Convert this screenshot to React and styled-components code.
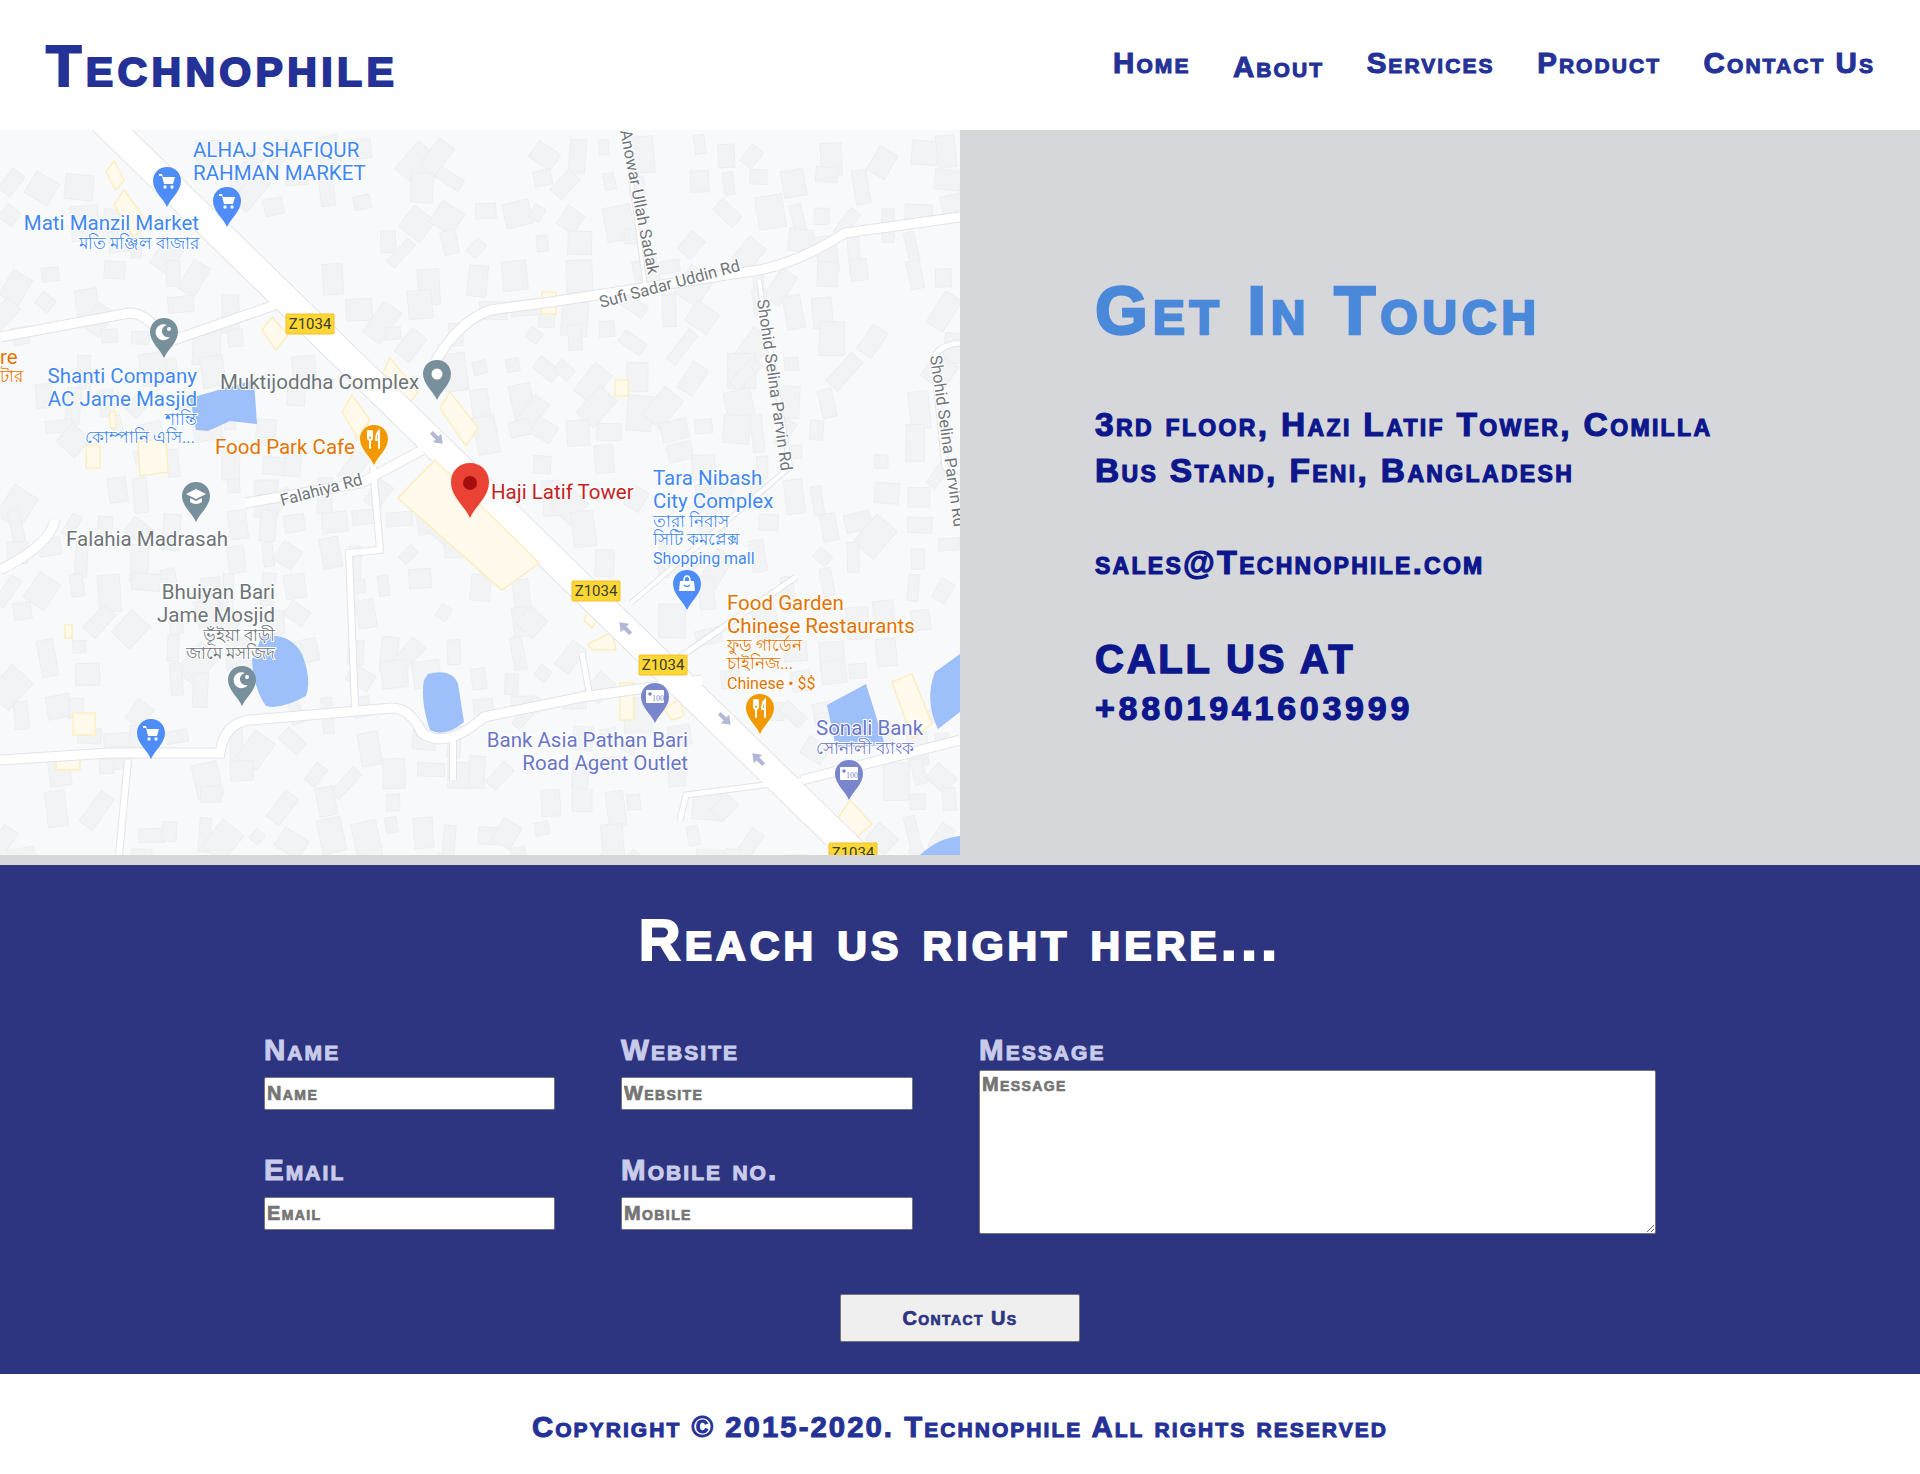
import React from 'react';
import styled, {createGlobalStyle, css} from 'styled-components';

const GlobalStyle = createGlobalStyle`
    html, body {
        margin: 0;
        padding: 0;
        background: #fff;
    }
    * {
        box-sizing: border-box;
    }
`

// arial black is not around, so bold + stroke + some tracking gets near it
const blackCaps = css`
    font-family: "Liberation Sans", Arial, sans-serif;
    font-weight: 700;
    font-variant: small-caps;
    letter-spacing: 0.07em;
    -webkit-text-stroke: 0.035em currentColor;
`

const navLinks = [
    {label: 'Home'},
    {label: 'About', lowered: true},
    {label: 'Services'},
    {label: 'Product'},
    {label: 'Contact Us'},
]

const ROADS = [
    {d: 'M435 362 Q458 322 490 310 L551 302 L759 270 Q800 262 845 233 L960 217', w: 9},
    {d: 'M0 337 L129 313 Q150 313 165 343 L275 305', w: 9},
    {d: 'M625 130 L646 293', w: 3},
    {d: 'M759 280 L762 300 L790 467 L631 603', w: 4},
    {d: 'M960 343 Q934 346 934 362 L945 467 L960 480', w: 5},
    {d: 'M245 503 L361 483 L422 450', w: 9},
    {d: 'M373 467 L380 550 L349 553 L355 707', w: 6},
    {d: 'M0 760 L110 753 L220 753 Q224 723 250 720 L392 708 Q410 708 422 733 Q447 750 484 717 L582 697 L702 680', w: 9},
    {d: 'M55 520 Q50 545 0 570', w: 9},
    {d: 'M128 760 L119 855', w: 6},
    {d: 'M453 740 L453 780', w: 6},
    {d: 'M802 780 L960 740', w: 9},
    {d: 'M680 820 L686 795 L802 780', w: 5},
    {d: 'M680 657 L796 577', w: 5},
    {d: 'M582 653 L590 697', w: 5},
    {d: 'M100 118 L875 873', w: 27},
]

const WATER = [
    'M190 398 L254 380 L257 424 L230 421 L208 431 L196 430 Z',
    'M262 636 Q290 632 302 654 Q312 680 306 696 Q280 710 266 706 Q254 690 252 660 Z',
    'M428 674 Q452 668 458 684 L464 722 Q445 738 430 730 Q420 700 424 680 Z',
    'M827 705 L866 684 L885 745 L836 748 Z',
    'M960 654 L935 672 Q924 700 938 729 L960 712 Z',
    'M920 855 Q938 838 960 836 L960 855 Z',
]

const PARCELS = [
    '435,460 539,563 502,590 398,498',
    '114,161 124,180 116,190 106,172',
    '124,190 146,220 134,238 114,205',
    '272,317 288,335 276,350 262,330',
    '390,358 418,392 408,405 383,373',
    '352,395 370,420 358,438 342,412',
    '450,392 478,428 466,446 440,408',
    '542,292 556,292 556,314 542,314',
    '615,380 628,380 628,396 615,396',
    '110,412 116,412 116,428 110,428',
    '86,445 100,445 100,468 86,468',
    '138,442 166,438 168,472 140,476',
    '65,625 72,625 72,638 65,638',
    '73,713 95,713 95,735 73,735',
    '56,758 80,758 80,770 56,770',
    '620,683 634,683 634,720 620,720',
    '590,605 602,614 592,628 584,620',
    '588,644 612,632 616,650 592,650',
    '664,709 680,699 684,716 672,720',
    '892,682 912,674 932,724 912,738',
    '850,800 872,824 856,838 838,818',
]

const buildings = () => {
    let seed = 91
    const next = () => {
        seed = (seed * 16807) % 2147483647
        return seed / 2147483647
    }
    const list = []
    for (let y = 135; y < 850; y += 31) {
        for (let x = 4; x < 955; x += 31) {
            const w = 10 + next() * 18
            const h = 12 + next() * 26
            const rot = next() > 0.7 ? 30 + next() * 14 : -14 + next() * 20
            const px = x + next() * 12
            const py = y + next() * 12
            const keep = next() > 0.38
            const gap = Math.abs((px - 100) * 0.974 - (py - 118)) / 1.4
            if (keep && gap > 34) {
                list.push({x: px, y: py, w, h, rot})
            }
        }
    }
    return list
}

const LABELS = [
    {c: 'blue', a: 'start', x: 193, y: 157, t: 'ALHAJ SHAFIQUR'},
    {c: 'blue', a: 'start', x: 193, y: 180, t: 'RAHMAN MARKET'},
    {c: 'blue', a: 'end', x: 199, y: 230, t: 'Mati Manzil Market'},
    {c: 'blue', a: 'end', x: 199, y: 249, s: 16.5, t: 'মতি মঞ্জিল বাজার'},
    {c: 'orange', a: 'start', x: 0, y: 364, t: 're'},
    {c: 'orange', a: 'start', x: 0, y: 382, s: 16.5, t: 'টার'},
    {c: 'blue', a: 'end', x: 197, y: 383, t: 'Shanti Company'},
    {c: 'blue', a: 'end', x: 197, y: 406, t: 'AC Jame Masjid'},
    {c: 'blue', a: 'end', x: 197, y: 425, s: 16.5, t: 'শান্তি'},
    {c: 'blue', a: 'end', x: 195, y: 443, s: 16.5, t: 'কোম্পানি এসি...'},
    {c: 'grey', a: 'start', x: 220, y: 389, t: 'Muktijoddha Complex'},
    {c: 'orange', a: 'start', x: 215, y: 454, t: 'Food Park Cafe'},
    {c: 'red', a: 'start', x: 491, y: 499, t: 'Haji Latif Tower'},
    {c: 'grey', a: 'start', x: 66, y: 546, t: 'Falahia Madrasah'},
    {c: 'blue', a: 'start', x: 653, y: 485, t: 'Tara Nibash'},
    {c: 'blue', a: 'start', x: 653, y: 508, t: 'City Complex'},
    {c: 'blue', a: 'start', x: 653, y: 527, s: 16.5, t: 'তারা নিবাস'},
    {c: 'blue', a: 'start', x: 653, y: 545, s: 16.5, t: 'সিটি কমপ্লেক্স'},
    {c: 'blue', a: 'start', x: 653, y: 564, s: 16, t: 'Shopping mall'},
    {c: 'grey', a: 'end', x: 275, y: 599, t: 'Bhuiyan Bari'},
    {c: 'grey', a: 'end', x: 275, y: 622, t: 'Jame Mosjid'},
    {c: 'grey', a: 'end', x: 275, y: 641, s: 16.5, t: 'ভূঁইয়া বাড়ী'},
    {c: 'grey', a: 'end', x: 275, y: 659, s: 16.5, t: 'জামে মসজিদ'},
    {c: 'orange', a: 'start', x: 727, y: 610, t: 'Food Garden'},
    {c: 'orange', a: 'start', x: 727, y: 633, t: 'Chinese Restaurants'},
    {c: 'orange', a: 'start', x: 727, y: 651, s: 16.5, t: 'ফুড গার্ডেন'},
    {c: 'orange', a: 'start', x: 727, y: 669, s: 16.5, t: 'চাইনিজ...'},
    {c: 'orange', a: 'start', x: 727, y: 689, s: 16, t: 'Chinese • $$'},
    {c: 'purple', a: 'end', x: 688, y: 747, t: 'Bank Asia Pathan Bari'},
    {c: 'purple', a: 'end', x: 688, y: 770, t: 'Road Agent Outlet'},
    {c: 'purple', a: 'start', x: 816, y: 735, t: 'Sonali Bank'},
    {c: 'purple', a: 'start', x: 816, y: 754, s: 16.5, t: 'সোনালী ব্যাংক'},
]

const ROAD_NAMES = [
    {x: 620, y: 131, r: 79, t: 'Anowar Ullah Sadak'},
    {x: 601, y: 308, r: -15, t: 'Sufi Sadar Uddin Rd'},
    {x: 757, y: 300, r: 82, t: 'Shohid Selina Parvin Rd'},
    {x: 930, y: 356, r: 82, t: 'Shohid Selina Parvin Rd'},
    {x: 282, y: 506, r: -15, t: 'Falahiya Rd'},
]

const SHIELDS = [
    {x: 310, y: 324},
    {x: 596, y: 591},
    {x: 663, y: 665},
    {x: 853, y: 853},
]

const ARROWS = [
    {x: 437, y: 438, r: 135},
    {x: 625, y: 628, r: -45},
    {x: 725, y: 719, r: 135},
    {x: 758, y: 759, r: -45},
]

const PINS = [
    {x: 167, y: 207, c: '#4e8cf7', i: 'cart'},
    {x: 227, y: 227, c: '#4e8cf7', i: 'cart'},
    {x: 151, y: 759, c: '#4e8cf7', i: 'cart'},
    {x: 164, y: 358, c: '#78909c', i: 'moon'},
    {x: 242, y: 706, c: '#78909c', i: 'moon'},
    {x: 437, y: 400, c: '#78909c', i: 'dot'},
    {x: 196, y: 522, c: '#78909c', i: 'school'},
    {x: 374, y: 465, c: '#f29900', i: 'fork'},
    {x: 760, y: 734, c: '#f29900', i: 'fork'},
    {x: 687, y: 610, c: '#4e8cf7', i: 'bag'},
    {x: 655, y: 723, c: '#7986cb', i: 'bank'},
    {x: 849, y: 800, c: '#7986cb', i: 'bank'},
]

// drawn around 0,0 = the round head of the pin
const PinGlyph = ({kind}) => {
    switch (kind) {
        case 'cart':
            return (
                <g fill="#fff">
                    <path d="M-8 -7 H-5 L-4 -4 H8 L6 3 H-3 L-5 -5 H-8 Z"/>
                    <circle cx="-2" cy="6" r="1.7"/>
                    <circle cx="5" cy="6" r="1.7"/>
                </g>
            )
        case 'moon':
            return (
                <g fill="#fff">
                    <path d="M3 -7 A8 8 0 1 0 6 5 A6.2 6.2 0 1 1 3 -7 Z"/>
                    <circle cx="5" cy="-3" r="2"/>
                </g>
            )
        case 'dot':
            return <circle r="5.5" fill="#fff"/>
        case 'school':
            return (
                <g fill="#fff">
                    <path d="M0 -7 L10 -2 L0 3 L-10 -2 Z"/>
                    <path d="M-6 2 L0 5 L6 2 V6 Q0 10 -6 6 Z"/>
                </g>
            )
        case 'fork':
            return (
                <g fill="none" stroke="#fff" strokeWidth="2" strokeLinecap="round">
                    <path d="M-6 -8 V-2 Q-6 1 -4 1 V9 M-2 -8 V-2 Q-2 1 -4 1 M-4 -8 V-3"/>
                    <path d="M5 9 V-8 Q2 -5 2 1 H5"/>
                </g>
            )
        case 'bag':
            return (
                <g>
                    <path d="M-7 -3 H7 L8 7 H-8 Z" fill="#fff"/>
                    <path d="M-3 -3 Q-3 -8 0 -8 Q3 -8 3 -3" fill="none" stroke="#fff" strokeWidth="1.6"/>
                    <path d="M-3 1 Q0 4 3 1" fill="none" stroke="#4e8cf7" strokeWidth="1.4"/>
                </g>
            )
        case 'bank':
            return (
                <g>
                    <rect x="-9" y="-7" width="18" height="13" fill="#fff" rx="1"/>
                    <circle cx="-5" cy="-3" r="1.8" fill="#7986cb"/>
                    <BankNumber x="-3" y="4">100</BankNumber>
                </g>
            )
        default:
            return null
    }
}

const MapPin = ({x, y, c, i}) => (
    <g transform={`translate(${x} ${y - 26})`}>
        <path d="M0 -14 C8 -14 14 -8 14 0 C14 10 4 17 0 26 C-4 17 -14 10 -14 0 C-14 -8 -8 -14 0 -14 Z" fill={c}/>
        <PinGlyph kind={i}/>
    </g>
)

const MapPicture = () => (
    <MapSvg viewBox="0 130 960 725" role="img" aria-label="Map around Haji Latif Tower">
        <rect x="0" y="130" width="960" height="725" fill="#f8f9fb"/>
        {buildings().map((b, idx) => (
            <Building key={idx} x={b.x} y={b.y} width={b.w} height={b.h}
                      transform={`rotate(${b.rot} ${b.x} ${b.y})`}/>
        ))}
        {PARCELS.map(p => <Parcel key={p} points={p}/>)}
        {ROADS.map(r => <RoadEdge key={r.d} d={r.d} strokeWidth={r.w + 2}/>)}
        {ROADS.map(r => <RoadFill key={r.d} d={r.d} strokeWidth={r.w}/>)}
        <Parcel points="435,460 539,563 502,590 398,498"/>
        {WATER.map(d => <path key={d} d={d} fill="#9dc0fa"/>)}
        {ARROWS.map(a => (
            <path key={a.x} transform={`translate(${a.x} ${a.y}) rotate(${a.r})`}
                  d="M0 -8 L6 0 L2 0 L2 8 L-2 8 L-2 0 L-6 0 Z" fill="#b1b7d6"/>
        ))}
        {ROAD_NAMES.map(n => (
            <RoadName key={n.x} transform={`translate(${n.x} ${n.y}) rotate(${n.r})`}>{n.t}</RoadName>
        ))}
        {SHIELDS.map(s => (
            <g key={s.x}>
                <ShieldBox x={s.x - 24} y={s.y - 10} width="48" height="20" rx="1"/>
                <ShieldText x={s.x} y={s.y + 5}>Z1034</ShieldText>
            </g>
        ))}
        {PINS.map(p => <MapPin key={`${p.x}-${p.y}`} {...p}/>)}
        <g transform="translate(470 483)">
            <path d="M0 -20 C11 -20 19 -12 19 -1 C19 14 6 22 0 35 C-6 22 -19 14 -19 -1 C-19 -12 -11 -20 0 -20 Z" fill="#ea4335"/>
            <circle r="7" fill="#a50e0e"/>
        </g>
        {LABELS.map(l => (
            <MapLabel key={`${l.x}-${l.y}`} x={l.x} y={l.y} textAnchor={l.a} $tone={l.c} $size={l.s}>{l.t}</MapLabel>
        ))}
    </MapSvg>
)

const App = () => {
    return (
        <Page>
            <GlobalStyle/>
            <Header>
                <Logo>Technophile</Logo>
                <Nav>
                    {navLinks.map(link => (
                        <NavLink key={link.label} href="#" $lowered={link.lowered}>{link.label}</NavLink>
                    ))}
                </Nav>
            </Header>

            <Hero>
                <MapPicture/>
                <TouchPanel>
                    <TouchTitle>Get In Touch</TouchTitle>
                    <Address>3rd floor, Hazi Latif Tower, Comilla<br/>Bus Stand, Feni, Bangladesh</Address>
                    <Mail>sales@Technophile.com</Mail>
                    <CallTitle>CALL US AT</CallTitle>
                    <Phone>+8801941603999</Phone>
                </TouchPanel>
            </Hero>

            <ReachSection>
                <ReachTitle>Reach us right here...</ReachTitle>
                <FormGrid>
                    <Field>
                        <FieldLabel>Name</FieldLabel>
                        <TextInput placeholder="Name"/>
                    </Field>
                    <Field>
                        <FieldLabel>Website</FieldLabel>
                        <TextInput placeholder="Website"/>
                    </Field>
                    <MessageField>
                        <MessageLabel>Message</MessageLabel>
                        <MessageBox placeholder="Message"/>
                    </MessageField>
                    <Field>
                        <FieldLabel>Email</FieldLabel>
                        <TextInput placeholder="Email"/>
                    </Field>
                    <Field>
                        <FieldLabel>Mobile no.</FieldLabel>
                        <TextInput placeholder="Mobile"/>
                    </Field>
                </FormGrid>
                <SubmitButton type="button">Contact Us</SubmitButton>
            </ReachSection>

            <Footer>Copyright © 2015-2020. Technophile All rights reserved</Footer>
        </Page>
    );
};

export default App;

const Page = styled.div`
    width: 1920px;
`

const Header = styled.header`
    height: 130px;
    display: flex;
    align-items: center;
    justify-content: space-between;
    padding: 0 45px 0 46px;
    background: #fff;
`

const Logo = styled.div`
    ${blackCaps};
    font-size: 58px;
    line-height: 1;
    letter-spacing: 0.075em;
    color: #243196;
    padding-top: 1px;
`

const Nav = styled.nav`
    display: flex;
    gap: 42.5px;
`

const NavLink = styled.a`
    ${blackCaps};
    font-size: 29.5px;
    line-height: 1;
    color: #243196;
    text-decoration: none;
    margin-top: ${props => props.$lowered ? '4px' : '0'};
`

const Hero = styled.section`
    height: 735px;
    display: grid;
    grid-template-columns: 960px 960px;
    background: #d6d7db;
`

const MapSvg = styled.svg`
    display: block;
    width: 960px;
    height: 725px;
`

const Building = styled.rect`
    fill: #f2f3f5;
    stroke: #eceef1;
    stroke-width: 1;
`

const Parcel = styled.polygon`
    fill: #fffaeb;
    stroke: #fdeec2;
    stroke-width: 1.5;
`

const RoadEdge = styled.path`
    fill: none;
    stroke: #e2e4e9;
`

const RoadFill = styled.path`
    fill: none;
    stroke: #fff;
`

const toneColors = {
    blue: '#3f87f5',
    orange: '#e37400',
    grey: '#6d7478',
    purple: '#6a75c9',
    red: '#c5221f',
}

const MapLabel = styled.text`
    font-family: Roboto, "Noto Sans", sans-serif;
    font-size: ${props => props.$size || 20.5}px;
    fill: ${props => toneColors[props.$tone]};
    paint-order: stroke;
    stroke: #fff;
    stroke-width: 2px;
`

const RoadName = styled.text`
    font-family: Roboto, sans-serif;
    font-size: 16.5px;
    fill: #70757a;
    paint-order: stroke;
    stroke: #fff;
    stroke-width: 2px;
`

const ShieldBox = styled.rect`
    fill: #fdd835;
    stroke: #f3c02c;
`

const ShieldText = styled.text`
    font-family: Roboto, sans-serif;
    font-size: 15px;
    text-anchor: middle;
    fill: #3c3c2a;
`

const BankNumber = styled.text`
    font-family: "Liberation Serif", serif;
    font-size: 8px;
    fill: #7986cb;
`

const TouchPanel = styled.div`
    padding: 141px 0 0 135px;
    color: #0d178c;
`

const TouchTitle = styled.h1`
    ${blackCaps};
    margin: 0;
    font-size: 68px;
    line-height: 78px;
    color: #4a88d9;
`

const Address = styled.p`
    ${blackCaps};
    margin: 53px 0 0;
    font-size: 33.5px;
    line-height: 46px;
`

const Mail = styled.p`
    ${blackCaps};
    margin: 49px 0 0;
    font-size: 32.5px;
    line-height: 40px;
`

const CallTitle = styled.h2`
    ${blackCaps};
    margin: 53px 0 0;
    font-size: 40px;
    line-height: 46px;
    font-variant: normal;
`

const Phone = styled.p`
    ${blackCaps};
    margin: 4px 0 0;
    font-size: 34px;
    line-height: 44px;
    letter-spacing: 0.11em;
    font-variant: normal;
`

const ReachSection = styled.section`
    height: 509px;
    background: #2d3580;
    display: flex;
    flex-direction: column;
    align-items: center;
    padding-top: 42px;
`

const ReachTitle = styled.h2`
    ${blackCaps};
    margin: 0;
    font-size: 58px;
    line-height: 66px;
    color: #fff;
`

const FormGrid = styled.form`
    width: 1392px;
    margin-top: 59px;
    display: grid;
    grid-template-columns: 291px 292px 677px;
    grid-template-rows: 85px 85px;
    column-gap: 66px;
    row-gap: 35px;
`

const Field = styled.div`
    display: flex;
    flex-direction: column;
`

const MessageField = styled.div`
    grid-column: 3;
    grid-row: 1 / span 2;
    display: flex;
    flex-direction: column;
`

const labelStyle = css`
    ${blackCaps};
    font-size: 29.5px;
    line-height: 36px;
    color: #c9cbea;
`

const FieldLabel = styled.label`
    ${labelStyle};
    height: 45px;
`

const MessageLabel = styled.label`
    ${labelStyle};
    height: 38px;
`

const fieldText = css`
    ${blackCaps};
    font-size: 20px;
    background: #fff;
    color: #000;
    border: 1px solid #767676;
    border-radius: 2px;
    outline: none;
    &::placeholder {
        color: #757575;
        opacity: 1;
    }
`

const TextInput = styled.input`
    ${fieldText};
    width: 100%;
    height: 33px;
    padding: 1px 2px;
`

const MessageBox = styled.textarea`
    ${fieldText};
    width: 100%;
    height: 164px;
    padding: 2px;
`

const SubmitButton = styled.button`
    ${blackCaps};
    width: 240px;
    height: 48px;
    margin-top: 57px;
    font-size: 20px;
    color: #2d3580;
    background: #efefef;
    border: 1px solid #767676;
    border-radius: 2px;
`

const Footer = styled.footer`
    ${blackCaps};
    height: 100px;
    display: flex;
    align-items: center;
    justify-content: center;
    font-size: 29.3px;
    color: #243196;
    background: #fff;
    padding-top: 5px;
`
